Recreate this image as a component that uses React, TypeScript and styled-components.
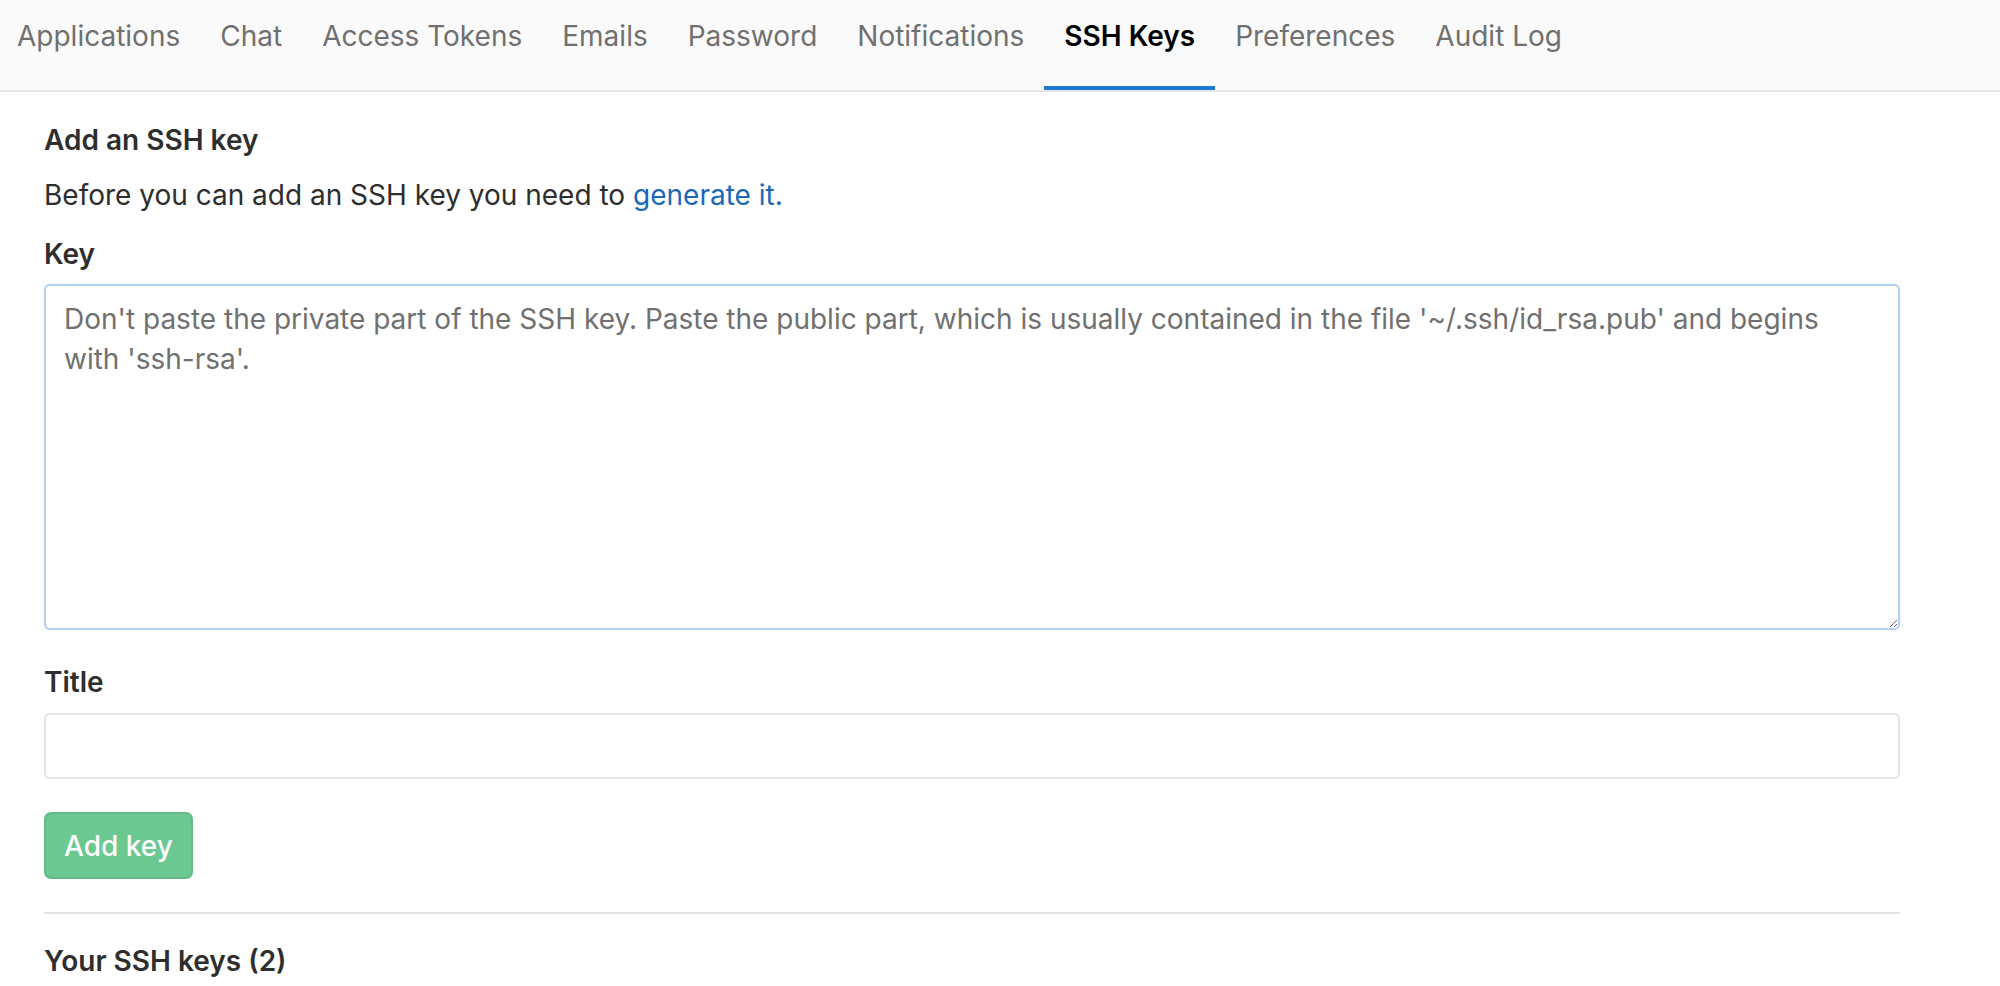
import React from "react";
import styled, { createGlobalStyle } from "styled-components";

const Global = createGlobalStyle`
  html, body { margin: 0; padding: 0; background: #ffffff; }
  body {
    font-family: Inter, "Noto Sans", "Liberation Sans", sans-serif;
    color: #2e2e2e;
    -webkit-font-smoothing: antialiased;
  }
  * { box-sizing: border-box; }
`;

const Nav = styled.nav`
  height: 92px;
  background: #fafafa;
  border-bottom: 2px solid #e5e5e5;
`;

const TabList = styled.ul`
  display: flex;
  list-style: none;
  margin: 0 0 0 -3px;
  padding: 0;
  height: 90px;
`;

const Tab = styled.li<{ $active?: boolean }>`
  display: flex;
  align-items: flex-start;
  padding: 16px 20px 0;
  height: 90px;
  font-size: 28px;
  line-height: 40px;
  color: ${(p) => (p.$active ? "#000000" : "#707070")};
  font-weight: ${(p) => (p.$active ? 600 : 400)};
  border-bottom: 4px solid ${(p) => (p.$active ? "#1f78d1" : "transparent")};
  white-space: nowrap;
  cursor: pointer;
`;

const Content = styled.main`
  display: flex;
  flex-direction: column;
  padding: 28px 100px 0 44px;
  font-size: 28px;
  line-height: 40px;
`;

const Heading = styled.h4`
  margin: 0;
  font-size: 28px;
  line-height: 40px;
  font-weight: 600;
  color: #2e2e2e;
`;

const Paragraph = styled.p`
  margin: 15px 0 0;
  color: #2e2e2e;
`;

const Link = styled.a`
  color: #1b69b6;
  text-decoration: none;
`;

const Label = styled.label<{ $gap: number }>`
  display: block;
  margin-top: ${(p) => p.$gap}px;
  font-weight: 600;
  color: #2e2e2e;
`;

const TextArea = styled.textarea`
  display: block;
  margin-top: 10px;
  width: 100%;
  height: 346px;
  padding: 13px 18px;
  border: 2px solid #b3d1f1;
  border-radius: 6px;
  font-family: inherit;
  font-size: 28px;
  line-height: 40px;
  color: #2e2e2e;
  outline: none;
  box-shadow: 0 0 4px rgba(115, 175, 234, 0.15);
  &::placeholder { color: #707070; }
`;

const Input = styled.input`
  display: block;
  margin-top: 11px;
  width: 100%;
  height: 66px;
  padding: 0 18px;
  border: 2px solid #e5e5e5;
  border-radius: 6px;
  font-family: inherit;
  font-size: 28px;
  outline: none;
`;

const Button = styled.button`
  align-self: flex-start;
  margin-top: 33px;
  height: 67px;
  width: 149px;
  padding: 0;
  background: #6ac890;
  border: 2px solid #66ba89;
  border-radius: 7px;
  color: #ffffff;
  font-family: inherit;
  font-size: 28px;
  font-weight: 500;
  cursor: not-allowed;
`;

const Rule = styled.hr`
  width: 100%;
  margin: 33px 0 0;
  border: 0;
  border-top: 2px solid #e5e5e5;
`;

const SubHeading = styled(Heading)`
  margin-top: 27px;
`;

const tabs = [
  "Applications",
  "Chat",
  "Access Tokens",
  "Emails",
  "Password",
  "Notifications",
  "SSH Keys",
  "Preferences",
  "Audit Log",
];

export default function App() {
  return (
    <>
      <Global />
      <Nav>
        <TabList>
          {tabs.map((t) => (
            <Tab key={t} $active={t === "SSH Keys"}>
              {t}
            </Tab>
          ))}
        </TabList>
      </Nav>
      <Content>
        <Heading>Add an SSH key</Heading>
        <Paragraph>
          Before you can add an SSH key you need to <Link href="#">generate it.</Link>
        </Paragraph>
        <Label $gap={19}>Key</Label>
        <TextArea placeholder="Don't paste the private part of the SSH key. Paste the public part, which is usually contained in the file '~/.ssh/id_rsa.pub' and begins with 'ssh-rsa'." />
        <Label $gap={32}>Title</Label>
        <Input type="text" />
        <Button disabled>Add key</Button>
        <Rule />
        <SubHeading>Your SSH keys (2)</SubHeading>
      </Content>
    </>
  );
}
